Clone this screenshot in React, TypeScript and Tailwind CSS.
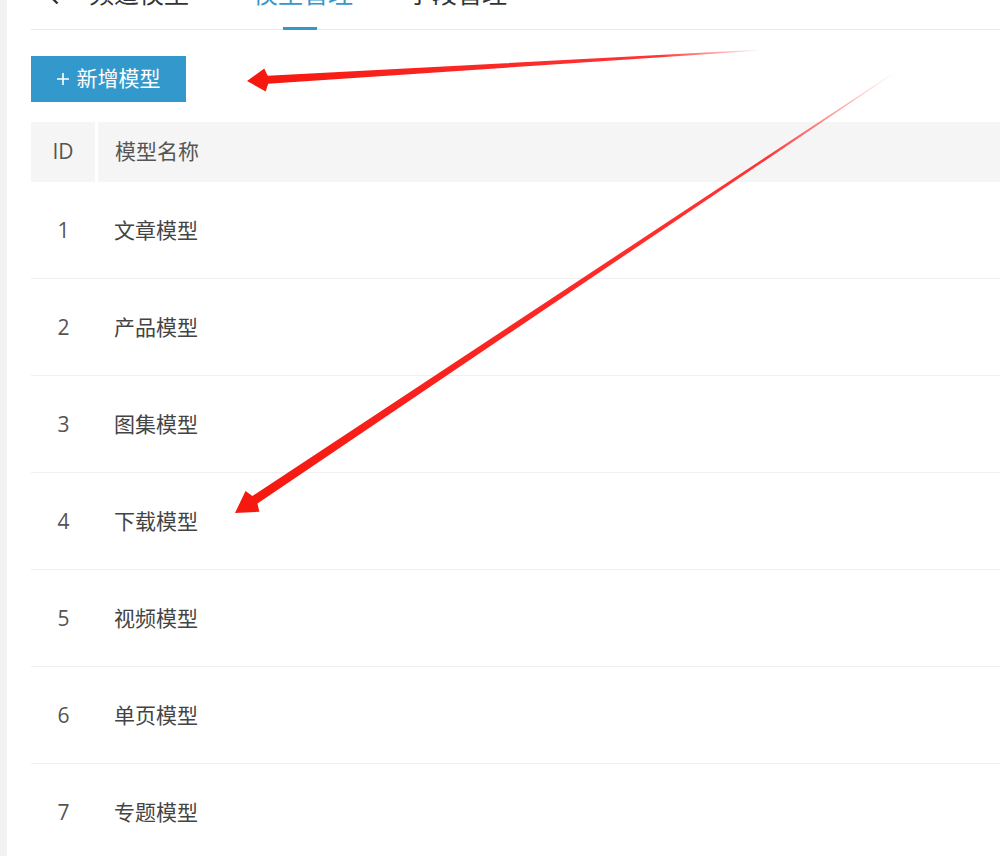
import React from 'react'

const ROWS = [
  { id: 1, name: '文章模型' },
  { id: 2, name: '产品模型' },
  { id: 3, name: '图集模型' },
  { id: 4, name: '下载模型' },
  { id: 5, name: '视频模型' },
  { id: 6, name: '单页模型' },
  { id: 7, name: '专题模型' },
]

const FONT = { fontFamily: '"Open Sans", "Noto Sans CJK SC", sans-serif' }

type P = [number, number]

// 尾部细、头部粗的标注箭头
function arrowPoints(tail: P, tip: P, shaftW: number, headW: number, barbL: number, joinL: number) {
  const dx = tip[0] - tail[0]
  const dy = tip[1] - tail[1]
  const len = Math.hypot(dx, dy)
  const ux = dx / len
  const uy = dy / len
  const nx = -uy
  const ny = ux
  const at = (d: number, off: number): P => [tip[0] - ux * d + nx * off, tip[1] - uy * d + ny * off]
  const pts: P[] = [
    [tail[0] + nx * 0.4, tail[1] + ny * 0.4],
    at(joinL, shaftW / 2),
    at(barbL, headW / 2),
    tip,
    at(barbL, -headW / 2),
    at(joinL, -shaftW / 2),
    [tail[0] - nx * 0.4, tail[1] - ny * 0.4],
  ]
  return pts.map((p) => p.join(',')).join(' ')
}

function Arrows() {
  return (
    <svg className="pointer-events-none absolute inset-0" width="1000" height="856">
      <defs>
        <linearGradient id="a1" gradientUnits="userSpaceOnUse" x1="762" y1="50" x2="250" y2="81">
          <stop offset="0" stopColor="#ff1e1e" stopOpacity="0" />
          <stop offset="0.2" stopColor="#ff1e1e" stopOpacity="0.9" />
          <stop offset="1" stopColor="#f5180f" />
        </linearGradient>
        <linearGradient id="a2" gradientUnits="userSpaceOnUse" x1="897" y1="71" x2="236" y2="512">
          <stop offset="0" stopColor="#ff1e1e" stopOpacity="0" />
          <stop offset="0.2" stopColor="#ff1e1e" stopOpacity="0.9" />
          <stop offset="1" stopColor="#f5180f" />
        </linearGradient>
      </defs>
      <polygon points={arrowPoints([762, 50], [247, 81], 8, 23, 18, 21)} fill="url(#a1)" />
      <polygon points={arrowPoints([897, 71], [235, 513], 9, 25, 21, 24)} fill="url(#a2)" />
    </svg>
  )
}

export default function App() {
  return (
    <div className="relative flex h-[856px] w-[1000px] overflow-hidden bg-white" style={FONT}>
      <div className="w-[7px] shrink-0 bg-[#f2f2f2]" />
      <div className="flex-1 pl-[24px]">
        {/* タブ（上端で切れている） */}
        <div className="-mt-[23px] flex h-[53px] items-stretch border-b border-[#e8e8e8] text-[25px] leading-[32px] text-[#333]">
          <div className="flex w-[222px] items-start pl-[18px]">
            <svg className="mt-[12px] mr-[30px] shrink-0" width="10" height="16" viewBox="0 0 10 16">
              <path d="M8.5 1.5 2 8l6.5 6.5" fill="none" stroke="#333" strokeWidth="2.4" />
            </svg>
            <span>频道模型</span>
          </div>
          <div className="relative flex w-[154px] items-start">
            <span className="text-[#3399cc]">模型管理</span>
            <div className="absolute bottom-[-1px] left-[30px] h-[3px] w-[34px] bg-[#3399cc]" />
          </div>
          <div className="flex items-start">
            <span>字段管理</span>
          </div>
        </div>

        <button className="mt-[26px] flex h-[46px] w-[155px] items-center justify-center bg-[#3399cc] text-[21px] text-white">
          <svg className="mr-[8px]" width="12" height="12" viewBox="0 0 12 12">
            <path d="M6 0v12M0 6h12" stroke="#fff" strokeWidth="1.6" />
          </svg>
          新增模型
        </button>

        <div className="mt-[20px] text-[21px] text-[#555]">
          <div className="flex h-[60px] bg-[#f5f5f5]">
            <div className="flex w-[64px] items-center justify-center">ID</div>
            <div className="w-[3px] bg-white" />
            <div className="flex items-center pl-[17px]">模型名称</div>
          </div>
          {ROWS.map((r) => (
            <div key={r.id} className="flex h-[97px] border-b border-[#efefef]">
              <div className="flex w-[65px] items-center justify-center pt-[2px]">{r.id}</div>
              <div className="w-[2px]" />
              <div className="flex items-center pl-[16px] pt-[2px] text-[#444]">{r.name}</div>
            </div>
          ))}
        </div>
      </div>
      <Arrows />
    </div>
  )
}
